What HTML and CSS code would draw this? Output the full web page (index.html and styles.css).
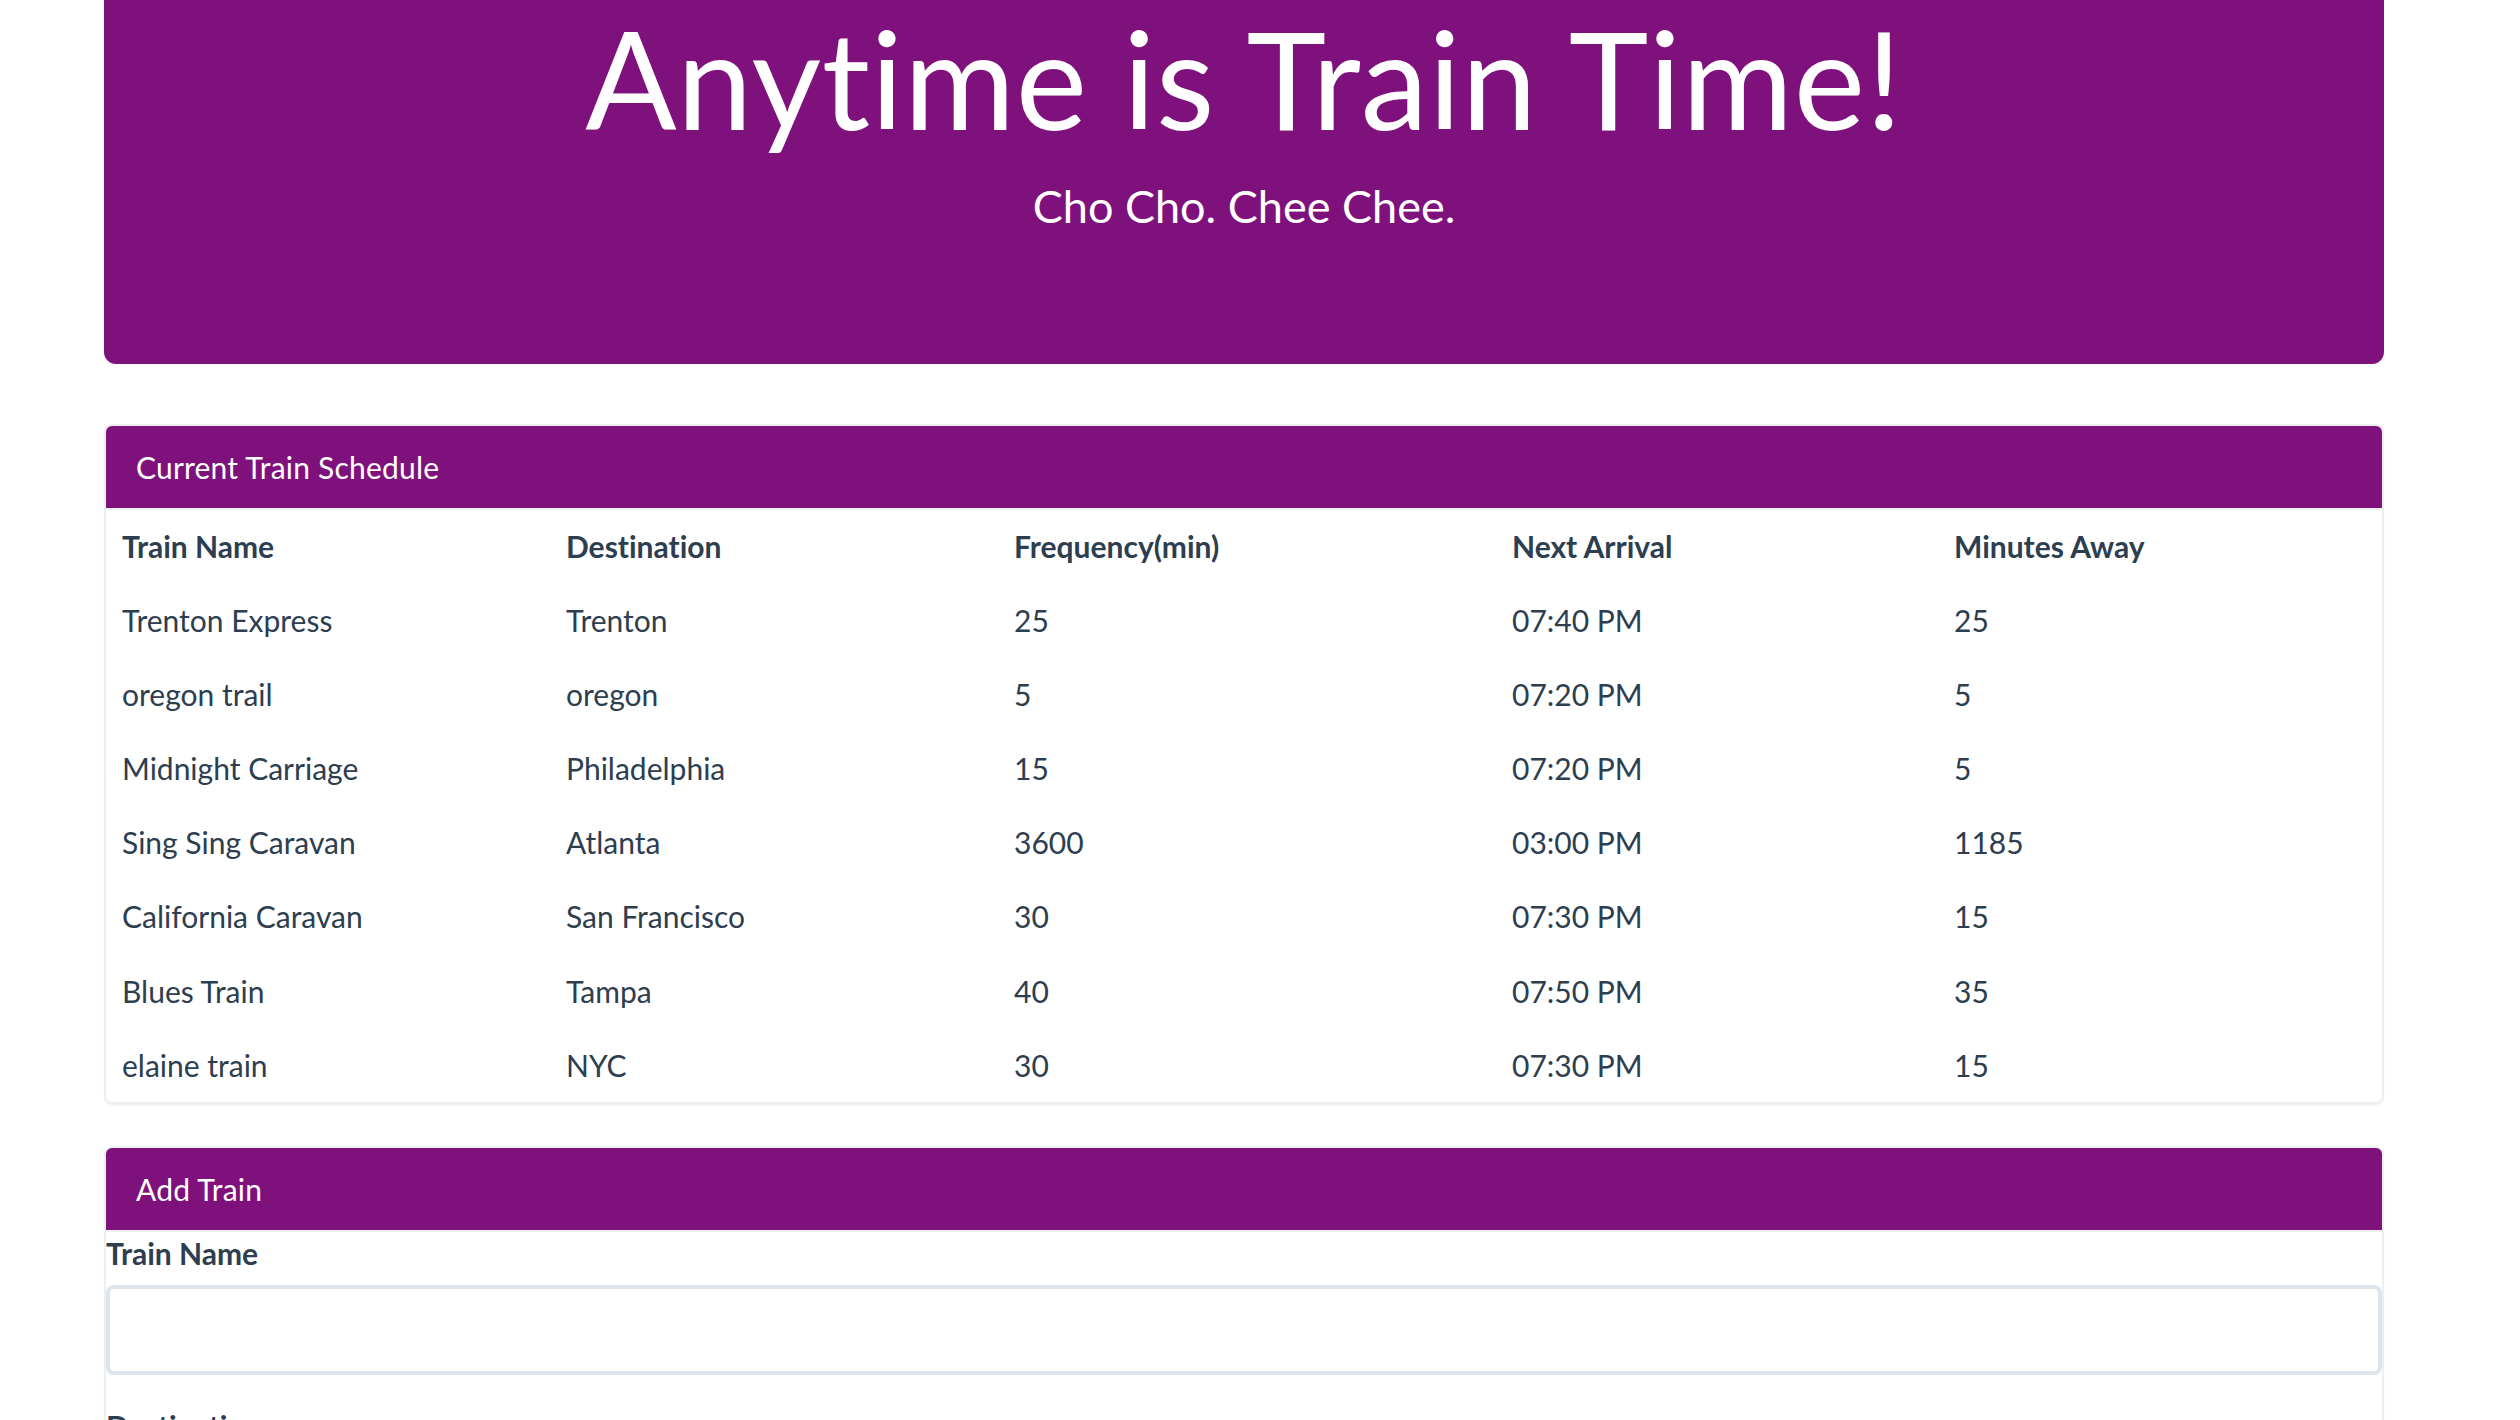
FILE: index.html
```html
<!DOCTYPE html>
<html lang="en">
<head>
<meta charset="utf-8">
<title>Train Time</title>
<link rel="stylesheet" href="styles.css">
</head>
<body>
<div class="container">
  <div class="jumbotron">
    <h1 class="jumbo-title">Anytime is Train Time!</h1>
    <p class="jumbo-sub">Cho Cho. Chee Chee.</p>
  </div>

  <div class="panel panel-schedule">
    <div class="panel-heading">
      <h3 class="panel-title">Current Train Schedule</h3>
    </div>
    <table class="schedule">
      <thead>
        <tr>
          <th class="col-name">Train Name</th>
          <th class="col-dest">Destination</th>
          <th class="col-freq">Frequency(min)</th>
          <th class="col-next">Next Arrival</th>
          <th class="col-min">Minutes Away</th>
        </tr>
      </thead>
      <tbody>
        <tr><td>Trenton Express</td><td>Trenton</td><td>25</td><td>07:40 PM</td><td>25</td></tr>
        <tr><td>oregon trail</td><td>oregon</td><td>5</td><td>07:20 PM</td><td>5</td></tr>
        <tr><td>Midnight Carriage</td><td>Philadelphia</td><td>15</td><td>07:20 PM</td><td>5</td></tr>
        <tr><td>Sing Sing Caravan</td><td>Atlanta</td><td>3600</td><td>03:00 PM</td><td>1185</td></tr>
        <tr><td>California Caravan</td><td>San Francisco</td><td>30</td><td>07:30 PM</td><td>15</td></tr>
        <tr><td>Blues Train</td><td>Tampa</td><td>40</td><td>07:50 PM</td><td>35</td></tr>
        <tr><td>elaine train</td><td>NYC</td><td>30</td><td>07:30 PM</td><td>15</td></tr>
      </tbody>
    </table>
  </div>

  <div class="panel panel-add">
    <div class="panel-heading">
      <h3 class="panel-title">Add Train</h3>
    </div>
    <form class="add-form">
      <div class="form-group">
        <label class="form-label" for="train-name">Train Name</label>
        <input class="form-control" id="train-name" type="text">
      </div>
      <div class="form-group">
        <label class="form-label" for="destination">Destination</label>
        <input class="form-control" id="destination" type="text">
      </div>
    </form>
  </div>
</div>
</body>
</html>
```

FILE: styles.css
```css
html {
  overflow: hidden;
}

body {
  margin: 0;
  background: #ffffff;
  font-family: "Lato", "Helvetica Neue", Arial, sans-serif;
  font-size: 30px;
  line-height: 1.428571;
  color: #2c3e50;
  font-variant-ligatures: none;
}

.container {
  width: 2280px;
  margin-left: 104px;
}

/* Jumbotron */
.jumbotron {
  background: #7f117c;
  color: #ffffff;
  text-align: center;
  padding: 4px 60px 96px;
  border-radius: 0 0 12px 12px;
  margin-bottom: 60px;
}

.jumbo-title {
  margin: 0;
  font-size: 135px;
  font-weight: 400;
  line-height: 1.1;
  letter-spacing: 0.7px;
}

.jumbo-sub {
  margin: 21px 0 30px;
  font-size: 45px;
  line-height: 64px;
  font-weight: 400;
}

/* Panels */
.panel {
  background: #ffffff;
  border: 2px solid #ecf0f1;
  border-radius: 8px;
  box-shadow: 0 2px 2px rgba(0, 0, 0, 0.05);
}

.panel-add {
  margin-top: 42px;
}

.panel-heading {
  background: #7f117c;
  color: #ffffff;
  padding: 20px 30px;
  border-bottom: 2px solid #ecf0f1;
  border-radius: 6px 6px 0 0;
}

.panel-title {
  margin: 0;
  font-size: 30px;
  font-weight: 400;
  line-height: 42px;
  letter-spacing: 0.2px;
}

/* Table */
.schedule {
  width: 100%;
  border-collapse: collapse;
  table-layout: fixed;
}

.schedule th,
.schedule td {
  padding: 16px;
  line-height: 42.2px;
  text-align: left;
  vertical-align: top;
}

.schedule th {
  font-weight: 700;
  line-height: 41px;
}

.col-name { width: 412px; }
.col-dest { width: 416px; }
.col-freq { width: 466px; }
.col-next { width: 410px; }

/* Form */
.add-form {
  padding: 0;
}

.form-group {
  margin-bottom: 30px;
}

.form-label {
  display: block;
  font-weight: 700;
  margin-bottom: 10px;
}

.form-control {
  display: block;
  box-sizing: border-box;
  width: 100%;
  height: 90px;
  padding: 20px 24px;
  font-family: inherit;
  font-size: 30px;
  color: #2c3e50;
  background: #ffffff;
  border: 4px solid #dce4ec;
  border-radius: 8px;
  outline: none;
}
```
